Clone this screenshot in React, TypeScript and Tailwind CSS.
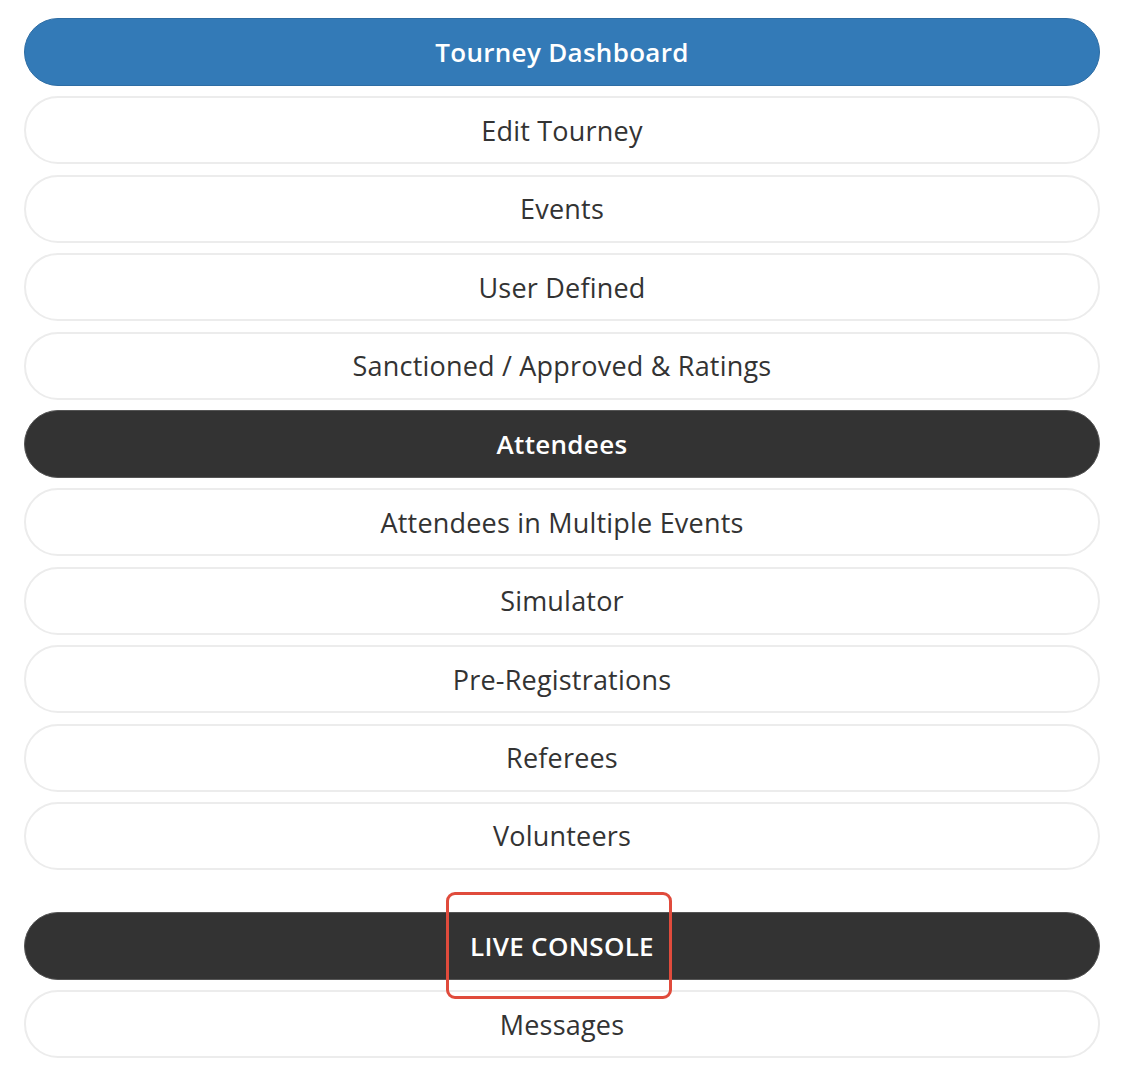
import React from "react";

const items: { label: string; variant: "primary" | "dark" | "default"; extraTop?: boolean; annotated?: boolean }[] = [
  { label: "Tourney Dashboard", variant: "primary" },
  { label: "Edit Tourney", variant: "default" },
  { label: "Events", variant: "default" },
  { label: "User Defined", variant: "default" },
  { label: "Sanctioned / Approved & Ratings", variant: "default" },
  { label: "Attendees", variant: "dark" },
  { label: "Attendees in Multiple Events", variant: "default" },
  { label: "Simulator", variant: "default" },
  { label: "Pre-Registrations", variant: "default" },
  { label: "Referees", variant: "default" },
  { label: "Volunteers", variant: "default" },
  { label: "LIVE CONSOLE", variant: "dark", extraTop: true, annotated: true },
  { label: "Messages", variant: "default" },
];

export default function App() {
  return (
    <div
      className="w-[1141px] h-[1068px] bg-white overflow-hidden"
      style={{ fontFamily: '"Open Sans", "Noto Sans", sans-serif' }}
    >
      <div className="pt-[18px] px-[24px] w-[1124px] flex flex-col">
        {items.map((it, i) => {
          const base =
            "relative h-[68px] w-full rounded-full flex items-center justify-center leading-none";
          const variant =
            it.variant === "primary"
              ? "bg-[#337ab7] border border-[#2e6da4] text-white font-semibold text-[26px]"
              : it.variant === "dark"
              ? "bg-[#333333] border border-[#555] text-white font-semibold text-[26px]"
              : "bg-white border-2 border-[#ececec] text-[#333333] font-medium text-[27px]";
          const mt = i === 0 ? "" : it.extraTop ? "mt-[42px]" : "mt-[10.4px]";
          return (
            <div key={it.label} className={`${base} ${variant} ${mt}`}>
              <span className={it.variant === "default" ? "tracking-[0.2px]" : "tracking-[0.3px]"}>{it.label}</span>
              {it.annotated && (
                <div className="absolute z-10 left-[421px] top-[-21px] w-[226px] h-[107px] border-[3px] border-[#e04b3c] rounded-[9px] pointer-events-none" />
              )}
            </div>
          );
        })}
      </div>
    </div>
  );
}
